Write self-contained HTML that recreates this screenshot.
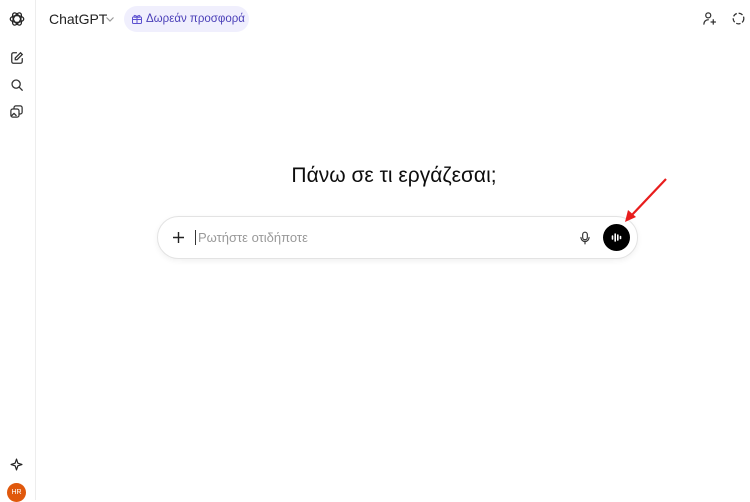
<!DOCTYPE html>
<html><head><meta charset="utf-8"><style>
*{margin:0;padding:0;box-sizing:border-box}
body{width:750px;height:500px;background:#fff;font-family:"Liberation Sans","DejaVu Sans",sans-serif;position:relative;overflow:hidden;color:#0d0d0d}
.side{position:absolute;left:0;top:0;width:36px;height:500px;border-right:1px solid #ededed;background:#fff}
.ic{position:absolute}
</style></head><body>
<div class="side">
<svg class="ic" style="left:8px;top:10px" width="18" height="18" viewBox="0 0 24 24" fill="none" stroke="#222" stroke-width="1.6"><ellipse cx="12" cy="12" rx="9" ry="4.5"/><ellipse cx="12" cy="12" rx="9" ry="4.5" transform="rotate(60 12 12)"/><ellipse cx="12" cy="12" rx="9" ry="4.5" transform="rotate(120 12 12)"/></svg>
<svg class="ic" style="left:10px;top:51px" width="14" height="14" viewBox="0 0 24 24" fill="none" stroke="#333" stroke-width="2.2" stroke-linecap="round"><path d="M11 3H6a3 3 0 0 0-3 3v12a3 3 0 0 0 3 3h12a3 3 0 0 0 3-3v-5"/><path d="M18 3l3 3-9 9H9v-3z"/></svg>
<svg class="ic" style="left:10px;top:78px" width="14" height="14" viewBox="0 0 24 24" fill="none" stroke="#333" stroke-width="2.2" stroke-linecap="round"><circle cx="10.5" cy="10.5" r="7"/><path d="M16 16l5 5"/></svg>
<svg class="ic" style="left:9px;top:104px" width="15" height="15" viewBox="0 0 24 24" fill="none" stroke="#333" stroke-width="2" stroke-linejoin="round"><rect x="3" y="8" width="13" height="13" rx="3"/><path d="M8 8V6a3 3 0 0 1 3-3h7a3 3 0 0 1 3 3v7a3 3 0 0 1-3 3h-2"/><path d="M4 19l4-4 4 4"/></svg>
<svg class="ic" style="left:10px;top:458px" width="13" height="13" viewBox="0 0 24 24" fill="none" stroke="#222" stroke-width="2.2" stroke-linejoin="round"><path d="M12 2l2.5 7.5L22 12l-7.5 2.5L12 22l-2.5-7.5L2 12l7.5-2.5z"/></svg>
<div style="position:absolute;left:7px;top:483px;width:19px;height:19px;border-radius:50%;background:#e0580c;color:#fff;font-size:7px;line-height:19px;text-align:center">HR</div>
</div>
<div style="position:absolute;left:49px;top:11px;font-size:14px;color:#222;white-space:nowrap">ChatGPT</div>
<svg class="ic" style="left:105px;top:14px" width="10" height="10" viewBox="0 0 10 10" fill="none" stroke="#999" stroke-width="1.2"><path d="M1.5 3.5L5 7l3.5-3.5"/></svg>
<div style="position:absolute;left:124px;top:6px;width:125px;height:26px;border-radius:13px;background:#f0effd;color:#4a3fb8;font-size:11.5px;line-height:26px;padding-left:22px;white-space:nowrap">Δωρεάν προσφορά</div>
<svg class="ic" style="left:131px;top:13px" width="12" height="12" viewBox="0 0 24 24" fill="none" stroke="#5b4fd0" stroke-width="2"><rect x="3" y="8" width="18" height="13" rx="2"/><path d="M3 13h18M12 8v13M12 8c-2-4-6-4-6-1s6 1 6 1c2-4 6-4 6-1s-6 1-6 1"/></svg>
<svg class="ic" style="left:702px;top:11px" width="15" height="15" viewBox="0 0 24 24" fill="none" stroke="#333" stroke-width="2" stroke-linecap="round"><circle cx="10" cy="7" r="4"/><path d="M3 21c0-4 3-7 7-7"/><path d="M18 14v7M14.5 17.5h7"/></svg>
<svg class="ic" style="left:731px;top:11px" width="15" height="15" viewBox="0 0 24 24" fill="none" stroke="#333" stroke-width="2" stroke-dasharray="7 3"><circle cx="12" cy="12" r="8.5"/></svg>
<div style="position:absolute;left:0;width:788px;top:164px;text-align:center;font-size:21px;color:#0d0d0d">Πάνω σε τι εργάζεσαι;</div>
<div style="position:absolute;left:157px;top:216px;width:481px;height:43px;border:1px solid #e3e3e3;border-radius:22px;box-shadow:0 2px 6px rgba(0,0,0,0.06);background:#fff"></div>
<svg class="ic" style="left:172px;top:231px" width="13" height="13" viewBox="0 0 13 13" stroke="#222" stroke-width="1.4"><path d="M6.5 1v11M1 6.5h11"/></svg>
<div style="position:absolute;left:195px;top:230px;width:1px;height:15px;background:#333"></div>
<div style="position:absolute;left:198px;top:230px;font-size:13px;color:#999">Ρωτήστε οτιδήποτε</div>
<svg class="ic" style="left:578px;top:230px" width="14" height="16" viewBox="0 0 24 24" fill="none" stroke="#333" stroke-width="2" stroke-linecap="round"><rect x="8" y="2" width="8" height="13" rx="4"/><path d="M5 11a7 7 0 0 0 14 0M12 18v4"/></svg>
<div style="position:absolute;left:603px;top:224px;width:27px;height:27px;border-radius:50%;background:#000"></div>
<svg class="ic" style="left:609px;top:230px" width="15" height="15" viewBox="0 0 15 15" stroke="#fff" stroke-width="1.6" stroke-linecap="round"><path d="M3.5 6v3M6.2 4v7M8.8 5v5M11.5 6.5v2"/></svg>
<svg class="ic" style="left:620px;top:175px" width="50" height="50" viewBox="0 0 50 50"><path d="M46 4L10 42" stroke="#e81d1d" stroke-width="2.2"/><path d="M5 47l3-12 8 7z" fill="#e81d1d"/></svg>
</body></html>
